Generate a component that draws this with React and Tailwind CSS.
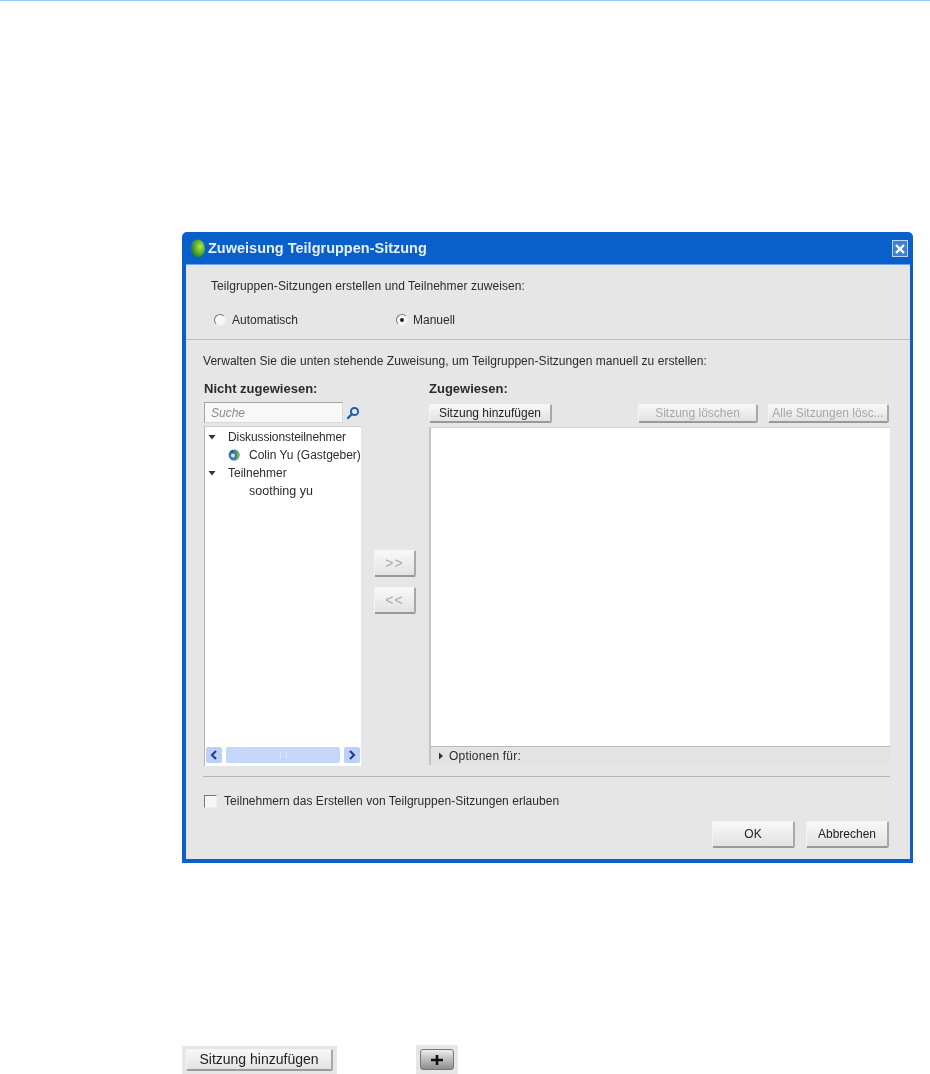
function Btn({ children, disabled, className }) {
  return (
    <div
      className={
        "flex items-center justify-center rounded-[2px] border-t border-l border-t-[#f4f4f4] border-l-[#f4f4f4] border-r-2 border-b-2 border-r-[#a8a8a8] border-b-[#999] bg-gradient-to-b from-[#f8f8f8] to-[#e2e2e2] text-[12px] " +
        (disabled ? "text-[#a8a8a8] " : "text-[#222] ") +
        className
      }
    >
      {children}
    </div>
  )
}

function Radio({ checked }) {
  return (
    <div className="flex h-[12px] w-[12px] items-center justify-center rounded-full border border-t-[#777] border-l-[#777] border-r-[#eee] border-b-[#eee] bg-[#f7f7f7]">
      {checked && <div className="h-[4px] w-[4px] rounded-full bg-[#222]" />}
    </div>
  )
}

function TitleIcon() {
  return (
    <svg width="14" height="19" viewBox="0 0 14 19" className="shrink-0">
      <defs>
        <radialGradient id="ball" cx="0.65" cy="0.4" r="0.7">
          <stop offset="0" stopColor="#b6e84a" />
          <stop offset="0.6" stopColor="#4fa828" />
          <stop offset="1" stopColor="#1d6a3a" />
        </radialGradient>
      </defs>
      <ellipse cx="7" cy="9.5" rx="7" ry="9" fill="url(#ball)" />
      <path d="M5 1 A7 9 0 0 0 3 17 A10 10 0 0 1 5 1Z" fill="#8fe0d8" opacity="0.85" />
    </svg>
  )
}

function Globe() {
  return (
    <svg width="12" height="12" viewBox="0 0 12 12" className="shrink-0">
      <circle cx="6" cy="6" r="5.5" fill="#2f7fb8" />
      <path d="M6 0.5 A5.5 5.5 0 0 1 6 11.5 A3 5.5 0 0 0 6 0.5Z" fill="#7cb342" />
      <circle cx="5" cy="6.5" r="2" fill="#e8e2d0" />
      <path d="M2 3 A5 5 0 0 1 5 1 L5 4Z" fill="#3c4a5a" />
    </svg>
  )
}

function Caret() {
  return (
    <svg width="8" height="6" viewBox="0 0 8 6" className="shrink-0">
      <path d="M0.5 1 H7.5 L4 5.5Z" fill="#333" />
    </svg>
  )
}

function ScrollArrow({ dir }) {
  return (
    <div className="flex h-[16px] w-[16px] items-center justify-center rounded-[2px] bg-[#bdd0f7]">
      <svg width="8" height="10" viewBox="0 0 8 10">
        <path d={dir === "left" ? "M6 1 L2 5 L6 9" : "M2 1 L6 5 L2 9"} fill="none" stroke="#26408a" strokeWidth="2.2" />
      </svg>
    </div>
  )
}

export default function App() {
  return (
    <div className="h-[1074px] w-[930px] overflow-hidden bg-white font-['Liberation_Sans',Arial,sans-serif]">
      <div className="h-[1px] bg-[#99ccff]" />

      {/* dialog */}
      <div className="ml-[182px] mt-[231px] flex h-[631px] w-[731px] flex-col rounded-t-[5px] bg-[#0a60cb] blur-[0.45px]">
        <div className="flex h-[32px] shrink-0 items-center justify-between pl-[9px] pr-[5px]">
          <div className="flex items-center gap-[3px]">
            <TitleIcon />
            <span className="mt-[1px] text-[14.5px] font-bold text-[#e4effb]">Zuweisung Teilgruppen-Sitzung</span>
          </div>
          <div className="mt-[1px] flex h-[17px] w-[16px] items-center justify-center border border-[#bcd6f4] bg-[#3f80d8]">
            <svg width="12" height="12" viewBox="0 0 12 12">
              <path d="M2 2 L10 10 M10 2 L2 10" stroke="#fff" strokeWidth="2.4" />
            </svg>
          </div>
        </div>

        <div className="mb-[4px] ml-[4px] mr-[3px] flex flex-1 flex-col border-t border-t-[#6fa6e6] bg-[#e6e6e6] text-[#2b2b2b]">
          {/* mode section */}
          <div className="h-[75px] shrink-0 border-b border-b-[#bdbdbd] pl-[25px] pt-[13px]">
            <div className="text-[12px] leading-[16px] tracking-[0.07px]">Teilgruppen-Sitzungen erstellen und Teilnehmer zuweisen:</div>
            <div className="mt-[19px] flex items-center text-[12px] leading-[14px]">
              <div className="ml-[3px] flex w-[182px] items-center gap-[6px]">
                <Radio />
                <span>Automatisch</span>
              </div>
              <div className="flex items-center gap-[5px]">
                <Radio checked />
                <span>Manuell</span>
              </div>
            </div>
          </div>

          {/* assignment section */}
          <div className="flex flex-1 flex-col pl-[17px] pr-[20px]">
            <div className="mt-[13px] text-[12px] leading-[16px] tracking-[0.05px]">Verwalten Sie die unten stehende Zuweisung, um Teilgruppen-Sitzungen manuell zu erstellen:</div>

            <div className="ml-[1px] mt-[13px] flex h-[384px]">
              <div className="flex w-[157px] shrink-0 flex-col">
                <div className="text-[13px] font-bold leading-[14px]">Nicht zugewiesen:</div>
                <div className="mt-[6px] flex items-center">
                  <div className="flex h-[21px] w-[139px] items-center border border-t-[#a5a5a0] border-l-[#a5a5a0] border-r-[#d8d8d8] border-b-[#d8d8d8] bg-[#f8f8f8] pl-[6px] text-[12px] italic text-[#8a8a8a]">
                    Suche
                  </div>
                  <svg width="14" height="14" viewBox="0 0 14 14" className="ml-[3px]">
                    <circle cx="8.5" cy="5.5" r="3.6" fill="none" stroke="#1f5fae" strokeWidth="2" />
                    <path d="M6 8 L2 12" stroke="#1f5fae" strokeWidth="2.4" strokeLinecap="round" />
                  </svg>
                </div>
                <div className="mt-[3px] flex flex-1 flex-col border-l border-t border-l-[#b5b5ac] border-t-[#d0d0d0] bg-white">
                  <div className="flex-1 pt-[1px] text-[12px] leading-[18px]">
                    <div className="flex items-center">
                      <span className="ml-[3px] mr-[12px] flex"><Caret /></span>
                      <span className="tracking-[-0.1px]">Diskussionsteilnehmer</span>
                    </div>
                    <div className="flex items-center whitespace-nowrap pl-[23px]">
                      <Globe />
                      <span className="ml-[9px]">Colin Yu (Gastgeber)</span>
                    </div>
                    <div className="flex items-center">
                      <span className="ml-[3px] mr-[12px] flex"><Caret /></span>
                      <span>Teilnehmer</span>
                    </div>
                    <div className="pl-[44px] text-[12.5px]">soothing yu</div>
                  </div>
                  <div className="flex h-[19px] items-start justify-between px-[1px]">
                    <ScrollArrow dir="left" />
                    <div className="mx-[4px] flex h-[16px] flex-1 items-center justify-center rounded-[2px] bg-[#c6d6f8]">
                      <div className="h-[7px] w-[7px] border-x border-[#dfe8fb]" />
                    </div>
                    <ScrollArrow dir="right" />
                  </div>
                </div>
              </div>

              <div className="flex w-[68px] shrink-0 flex-col pl-[13px] pt-[168px]">
                <Btn disabled className="h-[27px] w-[42px] text-[14px] tracking-[1px]">&gt;&gt;</Btn>
                <Btn disabled className="mt-[10px] h-[27px] w-[42px] text-[14px] tracking-[1px]">&lt;&lt;</Btn>
              </div>

              <div className="mb-[1px] flex min-w-0 flex-1 flex-col">
                <div className="text-[13px] font-bold leading-[14px]">Zugewiesen:</div>
                <div className="mt-[8px] flex items-center justify-between pr-[1px]">
                  <Btn className="h-[19px] w-[123px]">Sitzung hinzufügen</Btn>
                  <div className="flex gap-[10px]">
                    <Btn disabled className="h-[19px] w-[120px]">Sitzung löschen</Btn>
                    <Btn disabled className="h-[19px] w-[121px] whitespace-nowrap">Alle Sitzungen lösc...</Btn>
                  </div>
                </div>
                <div className="mt-[4px] flex flex-1 flex-col border-l-2 border-t border-l-[#c4c4c0] border-t-[#d4d4d4]">
                  <div className="flex-1 bg-white" />
                  <div className="flex h-[19px] items-center border-t border-t-[#b8b8b8] bg-[#e3e3e3] pl-[7px] text-[12px] leading-[14px] tracking-[0.2px]">
                    <svg width="6" height="8" viewBox="0 0 6 8" className="mr-[5px]">
                      <path d="M1 0.5 V7.5 L5 4Z" fill="#333" />
                    </svg>
                    Optionen für:
                  </div>
                </div>
              </div>
            </div>

            <div className="mt-[10px] h-[1px] bg-[#b4b4b4]" />

            <div className="mt-[17px] flex items-center pl-[1px]">
              <div className="h-[13px] w-[13px] border border-t-[#777] border-l-[#777] border-r-[#eee] border-b-[#eee] bg-[#f6f6f6]" />
              <span className="ml-[7px] text-[12px] leading-[14px] tracking-[0.03px]">Teilnehmern das Erstellen von Teilgruppen-Sitzungen erlauben</span>
            </div>

            <div className="mt-[13px] flex justify-end gap-[11px] pr-[1px]">
              <Btn className="h-[27px] w-[83px]">OK</Btn>
              <Btn className="h-[27px] w-[83px]">Abbrechen</Btn>
            </div>
          </div>
        </div>
      </div>

      {/* legend row */}
      <div className="ml-[182px] mt-[182px] flex items-start blur-[0.45px]">
        <div className="mt-[1px] flex h-[28px] w-[155px] items-center justify-center bg-[#e6e6e6] px-[4px]">
          <Btn className="h-[22px] w-full text-[14px]">Sitzung hinzufügen</Btn>
        </div>
        <div className="ml-[79px] flex h-[29px] w-[42px] items-center justify-center bg-[#e6e6e6]">
          <div className="flex h-[21px] w-[34px] items-center justify-center rounded-[3px] border border-[#777] bg-gradient-to-b from-[#eeeeee] to-[#8d8d8d]">
            <svg width="14" height="12" viewBox="0 0 14 12">
              <path d="M7 1 V11 M1 6 H13" stroke="#111" strokeWidth="2.6" />
            </svg>
          </div>
        </div>
      </div>
    </div>
  )
}
